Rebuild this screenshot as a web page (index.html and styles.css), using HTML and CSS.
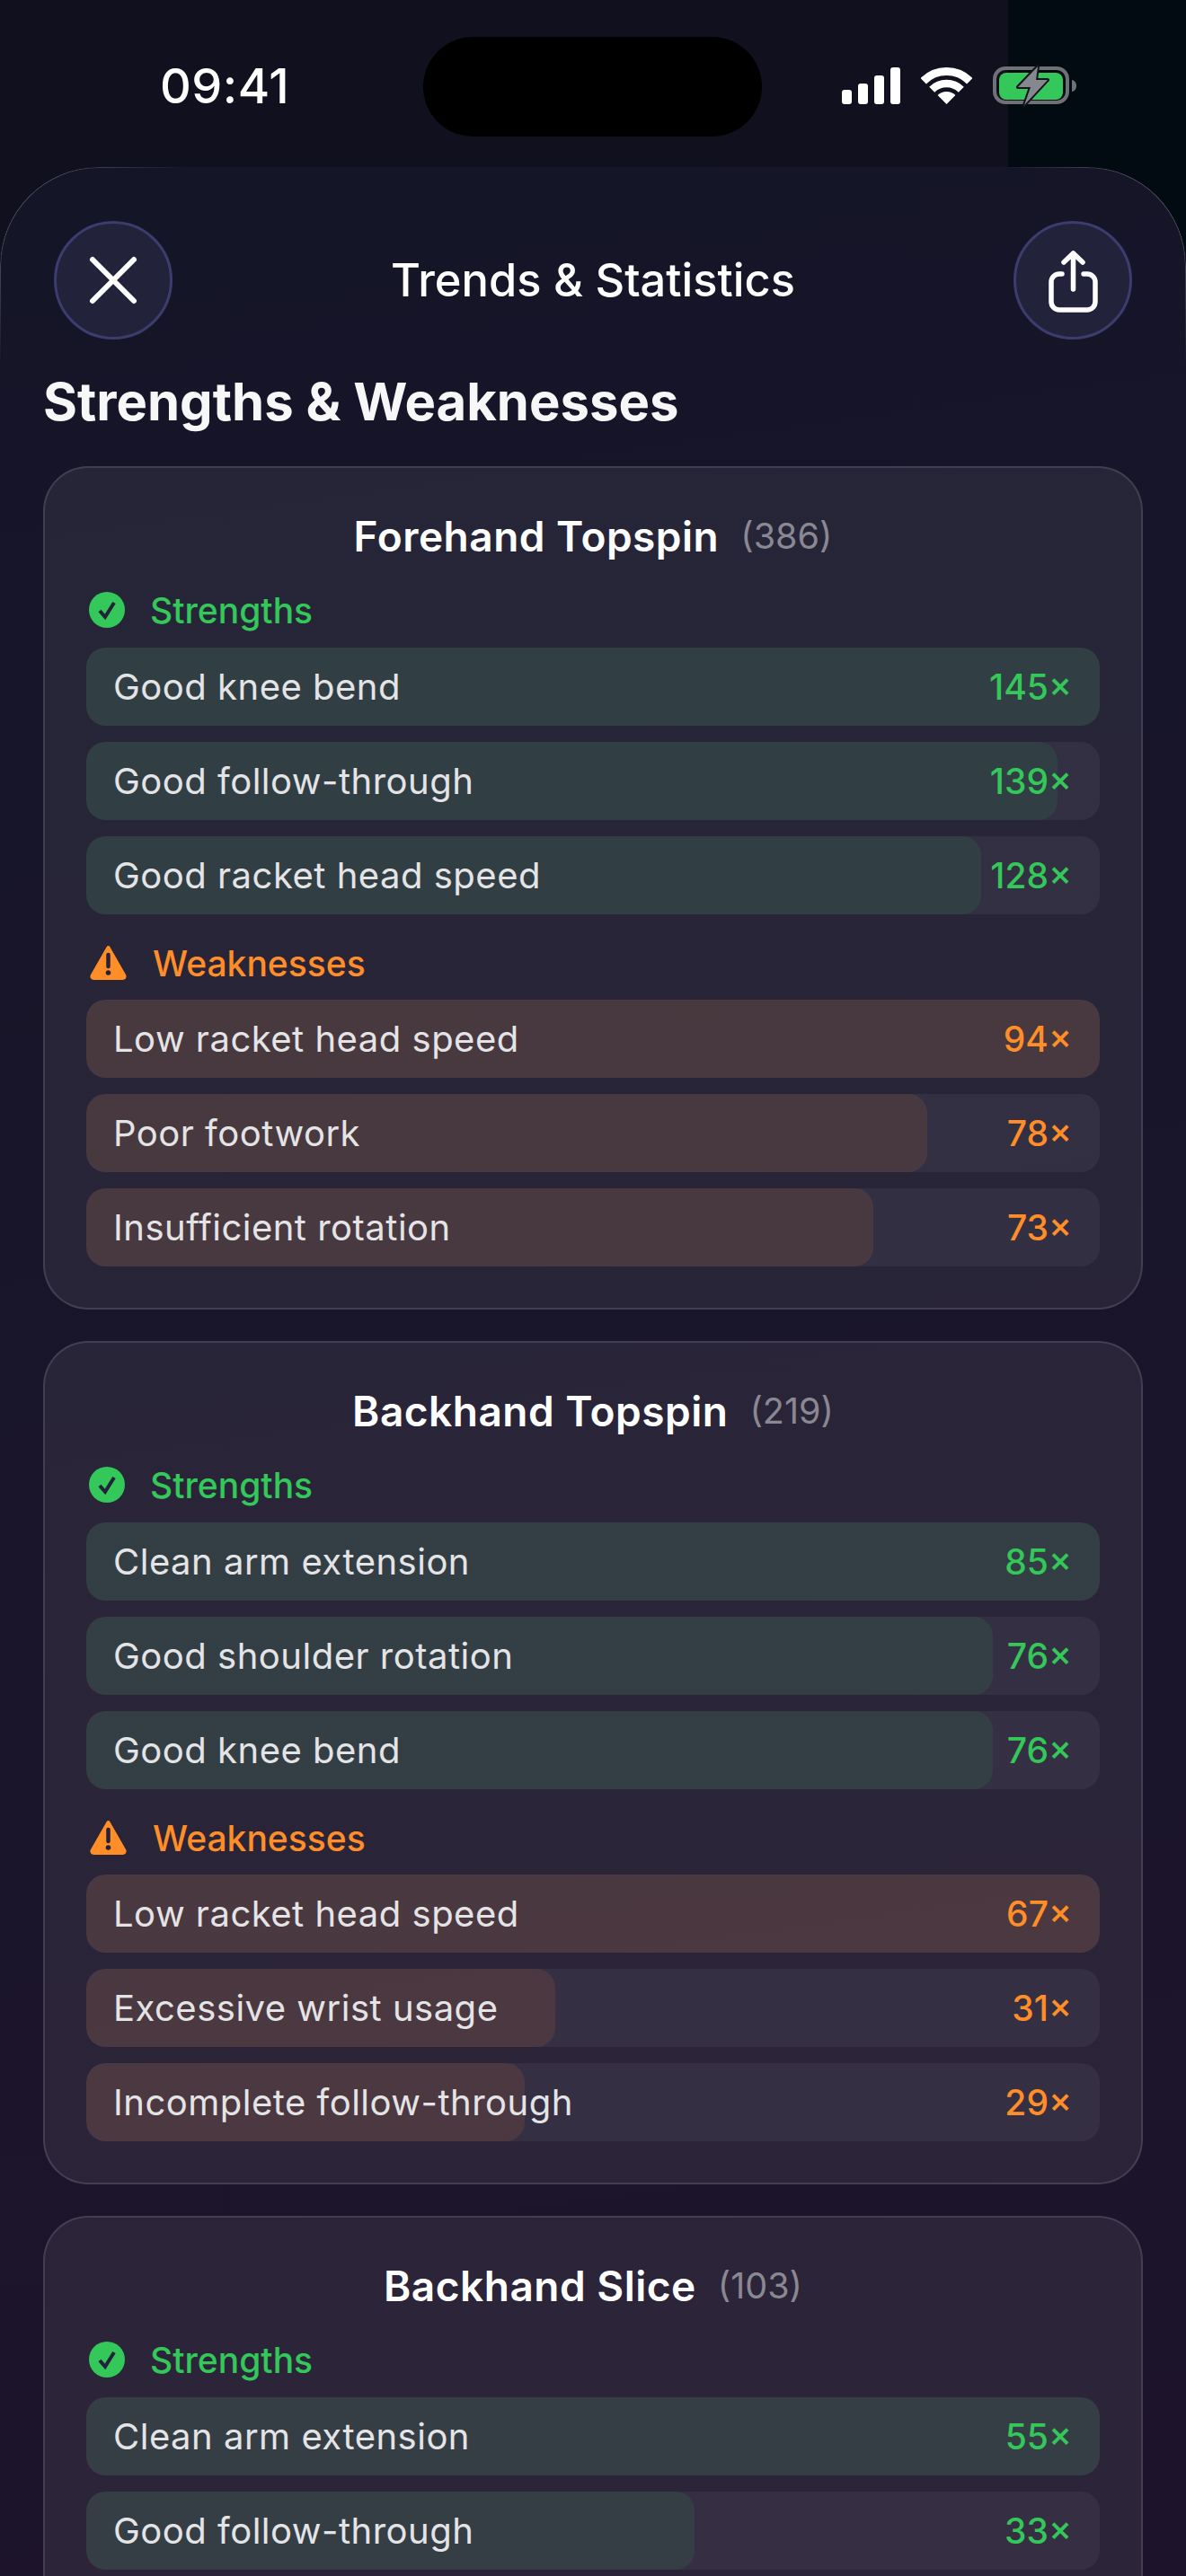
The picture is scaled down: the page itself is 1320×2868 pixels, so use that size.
FILE: index.html
```html
<!DOCTYPE html>
<html lang="en">
<head>
    <meta charset="UTF-8">
    <meta name="viewport" content="width=device-width, initial-scale=1.0">
    <title>Trends &amp; Statistics</title>
    <link rel="stylesheet" href="styles.css">
</head>
<body>
    <div class="status-bar">
        <div class="time">09:41</div>
        <div class="island"></div>
        <div class="status-icons">
            <svg class="icon-signal" width="65" height="41" viewBox="0 0 65 41" fill="#fff">
                <rect x="0" y="25" width="11" height="16" rx="3"/>
                <rect x="18" y="18" width="11" height="23" rx="3"/>
                <rect x="36" y="9" width="11" height="32" rx="3"/>
                <rect x="54" y="0" width="11" height="41" rx="3"/>
            </svg>
            <svg class="icon-wifi" width="57" height="42" viewBox="0 0 57 42" fill="none" stroke="#fff">
                <path d="M2.7 16.2A36.5 36.5 0 0 1 54.3 16.2" stroke-width="9"/>
                <path d="M12.2 25.7A23 23 0 0 1 44.8 25.7" stroke-width="8.5"/>
                <path d="M28.5 42L18.6 32.1A14 14 0 0 1 38.4 32.1Z" fill="#fff" stroke="none"/>
            </svg>
            <svg class="icon-battery" width="93" height="50" viewBox="0 0 93 50">
                <rect x="2" y="7" width="81" height="38" rx="12" fill="none" stroke="#6f7176" stroke-width="4"/>
                <rect x="7" y="12" width="71" height="30" rx="8" fill="#34c759"/>
                <path d="M88 20c3 .5 5 3 5 6.500s-2 6-5 6.500z" fill="#6f7176"/>
                <path d="M50 5L28 28H42L35 48L61 20H48Z" fill="#85888c" stroke="#13121f" stroke-width="4" stroke-linejoin="round" paint-order="stroke"/>
            </svg>
        </div>
    </div>

    <main class="sheet">
        <header class="sheet-header">
            <button class="round-btn">
                <svg width="60" height="60" viewBox="0 0 60 60" fill="none" stroke="#fff" stroke-width="6" stroke-linecap="round">
                    <path d="M7 7L53 53M53 7L7 53"/>
                </svg>
            </button>
            <div class="sheet-title">Trends &amp; Statistics</div>
            <button class="round-btn">
                <svg width="70" height="80" viewBox="0 0 70 80" fill="none" stroke="#fff" stroke-width="5.500" stroke-linecap="round" stroke-linejoin="round">
                    <path d="M23 33H20a9 9 0 0 0-9 9V64a9 9 0 0 0 9 9H51a9 9 0 0 0 9-9V42a9 9 0 0 0-9-9H47"/>
                    <path d="M35.500 10V50M25 20L35.500 10L46 20"/>
                </svg>
            </button>
        </header>

        <h1 class="page-heading">Strengths &amp; Weaknesses</h1>

        <section class="card">
            <h2 class="card-title">Forehand Topspin <span class="card-count">(386)</span></h2>
            <div class="group-head good">
                <svg class="icon-check" width="40" height="40" viewBox="0 0 40 40"><circle cx="20" cy="20" r="20" fill="#34c759"/><path d="M12 21L18 28L28 12" fill="none" stroke="#24223a" stroke-width="4"/></svg>
                Strengths
            </div>
            <div class="rows">
                <div class="row good"><div class="fill" style="width:100%"></div><span class="label">Good knee bend</span><span class="value">145×</span></div>
                <div class="row good"><div class="fill" style="width:95.86%"></div><span class="label">Good follow-through</span><span class="value">139×</span></div>
                <div class="row good"><div class="fill" style="width:88.28%"></div><span class="label">Good racket head speed</span><span class="value">128×</span></div>
            </div>
            <div class="group-head bad">
                <svg class="icon-warn" width="43" height="40" viewBox="0 0 43 40"><path d="M21.500 3L39.500 34.500Q40 37 37.500 37H5.500Q3 37 3.500 34.500Z" fill="#ff8d28" stroke="#ff8d28" stroke-width="4" stroke-linejoin="round"/><path d="M21.500 11V24" stroke="#24223a" stroke-width="4.500" stroke-linecap="round"/><circle cx="21.500" cy="31" r="2.800" fill="#24223a"/></svg>
                Weaknesses
            </div>
            <div class="rows">
                <div class="row bad"><div class="fill" style="width:100%"></div><span class="label">Low racket head speed</span><span class="value">94×</span></div>
                <div class="row bad"><div class="fill" style="width:82.98%"></div><span class="label">Poor footwork</span><span class="value">78×</span></div>
                <div class="row bad"><div class="fill" style="width:77.66%"></div><span class="label">Insufficient rotation</span><span class="value">73×</span></div>
            </div>
        </section>

        <section class="card">
            <h2 class="card-title">Backhand Topspin <span class="card-count">(219)</span></h2>
            <div class="group-head good">
                <svg class="icon-check" width="40" height="40" viewBox="0 0 40 40"><circle cx="20" cy="20" r="20" fill="#34c759"/><path d="M12 21L18 28L28 12" fill="none" stroke="#24223a" stroke-width="4"/></svg>
                Strengths
            </div>
            <div class="rows">
                <div class="row good"><div class="fill" style="width:100%"></div><span class="label">Clean arm extension</span><span class="value">85×</span></div>
                <div class="row good"><div class="fill" style="width:89.41%"></div><span class="label">Good shoulder rotation</span><span class="value">76×</span></div>
                <div class="row good"><div class="fill" style="width:89.41%"></div><span class="label">Good knee bend</span><span class="value">76×</span></div>
            </div>
            <div class="group-head bad">
                <svg class="icon-warn" width="43" height="40" viewBox="0 0 43 40"><path d="M21.500 3L39.500 34.500Q40 37 37.500 37H5.500Q3 37 3.500 34.500Z" fill="#ff8d28" stroke="#ff8d28" stroke-width="4" stroke-linejoin="round"/><path d="M21.500 11V24" stroke="#24223a" stroke-width="4.500" stroke-linecap="round"/><circle cx="21.500" cy="31" r="2.800" fill="#24223a"/></svg>
                Weaknesses
            </div>
            <div class="rows">
                <div class="row bad"><div class="fill" style="width:100%"></div><span class="label">Low racket head speed</span><span class="value">67×</span></div>
                <div class="row bad"><div class="fill" style="width:46.27%"></div><span class="label">Excessive wrist usage</span><span class="value">31×</span></div>
                <div class="row bad"><div class="fill" style="width:43.28%"></div><span class="label">Incomplete follow-through</span><span class="value">29×</span></div>
            </div>
        </section>

        <section class="card">
            <h2 class="card-title">Backhand Slice <span class="card-count">(103)</span></h2>
            <div class="group-head good">
                <svg class="icon-check" width="40" height="40" viewBox="0 0 40 40"><circle cx="20" cy="20" r="20" fill="#34c759"/><path d="M12 21L18 28L28 12" fill="none" stroke="#24223a" stroke-width="4"/></svg>
                Strengths
            </div>
            <div class="rows">
                <div class="row good"><div class="fill" style="width:100%"></div><span class="label">Clean arm extension</span><span class="value">55×</span></div>
                <div class="row good"><div class="fill" style="width:60%"></div><span class="label">Good follow-through</span><span class="value">33×</span></div>
            </div>
        </section>
    </main>
</body>
</html>
```

FILE: styles.css
```css
html, body {
    margin: 0;
    padding: 0;
    height: 2868px;
    overflow: hidden;
}
body {
    font-family: Inter, "Noto Sans", sans-serif;
    color: white;
    background-color: #10101e;
    background-image: linear-gradient(#020b11, #020b11);
    background-size: 198px 320px;
    background-position: top right;
    background-repeat: no-repeat;
}

/* status bar */
.status-bar {
    display: grid;
    grid-template-columns: 471px 377px 1fr;
    height: 186px;
    box-sizing: border-box;
    padding-top: 41px;
    background-image: linear-gradient(to right, #10101e 1122px, transparent 1122px);
}
.time {
    padding: 22px 0 0 178px;
    font-size: 54px;
    line-height: 66px;
    font-weight: 500;
    letter-spacing: 0.5px;
}
.island {
    height: 111px;
    border-radius: 56px;
    background-color: black;
}
.status-icons {
    display: flex;
    align-items: flex-start;
    padding: 34px 0 0 89px;
}
.icon-signal {
    margin-right: 23px;
}
.icon-wifi {
    margin-top: -1px;
    margin-right: 23px;
}
.icon-battery {
    margin-top: -6px;
}

/* sheet */
.sheet {
    position: relative;
    height: 2682px;
    box-sizing: border-box;
    padding: 60px 48px 0;
    border-radius: 110px 110px 0 0;
    background: linear-gradient(172deg, #151528 0%, #1d142b 100%);
    overflow: hidden;
}
.sheet::before {
    content: "";
    position: absolute;
    inset: 0;
    border: 1.500px solid transparent;
    border-bottom: none;
    border-radius: 110px 110px 0 0;
    background: radial-gradient(circle at 50px 60px, rgba(255, 255, 255, 0.35), transparent 170px) border-box,
        radial-gradient(circle at calc(100% - 50px) 60px, rgba(255, 255, 255, 0.35), transparent 170px) border-box;
    -webkit-mask: linear-gradient(black, black) padding-box, linear-gradient(black, black) border-box;
    -webkit-mask-composite: xor;
    mask-composite: exclude;
    pointer-events: none;
}
.sheet-header {
    position: relative;
    display: flex;
    align-items: center;
    justify-content: space-between;
    margin: 0 12px;
}
.round-btn {
    display: flex;
    align-items: center;
    justify-content: center;
    width: 132px;
    height: 132px;
    padding: 0;
    border: 3px solid #3c3c6e;
    border-radius: 50%;
    background-color: #22223a;
}
.sheet-title {
    font-size: 50.600px;
    line-height: 60px;
    font-weight: 500;
}
.page-heading {
    margin: 34px 0 37px 0;
    font-size: 58px;
    line-height: 70px;
    font-weight: 700;
    color: #f7f7f8;
}

/* cards */
.card {
    box-sizing: border-box;
    height: 939px;
    margin-bottom: 35px;
    padding: 46px;
    border: 2px solid rgba(255, 255, 255, 0.12);
    border-radius: 50px;
    background-color: rgba(255, 255, 255, 0.07);
}
.card-title {
    display: flex;
    align-items: center;
    justify-content: center;
    gap: 24px;
    margin: 0 0 22px;
    font-size: 46px;
    line-height: 60px;
    font-weight: 600;
    letter-spacing: 0.5px;
}
.card-count {
    font-size: 39.500px;
    font-weight: 400;
    letter-spacing: 0;
    color: #8a8893;
}
.group-head {
    display: flex;
    align-items: center;
    gap: 28px;
    height: 60px;
    margin: 24px 0 11px;
    padding-left: 3px;
    font-size: 39px;
    font-weight: 500;
}
.card-title + .group-head {
    margin: 0 0 12px;
}
.group-head.good {
    color: #34c759;
}
.group-head.bad {
    color: #ff8d28;
}
.rows {
    display: flex;
    flex-direction: column;
    gap: 18px;
}
.row {
    position: relative;
    display: flex;
    align-items: center;
    justify-content: space-between;
    height: 87px;
    padding: 0 31px 0 30px;
    border-radius: 21px;
    background-color: rgba(255, 255, 255, 0.05);
    overflow: hidden;
}
.fill {
    position: absolute;
    top: 0;
    left: 0;
    height: 100%;
    border-radius: 21px;
}
.row.good .fill {
    background-color: rgba(52, 199, 89, 0.1);
}
.row.bad .fill {
    background-color: rgba(255, 140, 50, 0.11);
}
.label {
    position: relative;
    font-size: 40px;
    letter-spacing: 0.5px;
    color: #e4e4e6;
}
.value {
    position: relative;
    font-size: 39px;
    font-weight: 500;
}
.row.good .value {
    color: #34c759;
}
.row.bad .value {
    color: #ff8d28;
}
```
